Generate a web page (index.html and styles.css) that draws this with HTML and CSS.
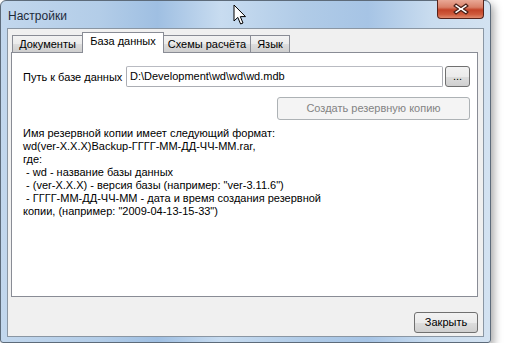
FILE: index.html
```html
<!DOCTYPE html>
<html>
<head>
    <title>Настройки</title>
    <link rel="stylesheet" href="styles.css">
</head>
<body>
    <div class="window">
        <div class="titlebar">
            <span class="title">Настройки</span>
            <div class="close-btn">
                <svg width="16" height="12" viewBox="0 0 16 12">
                    <path d="M3 1 L8 4.5 L13 1 L15 3 L10.5 6 L15 9 L13 11 L8 7.5 L3 11 L1 9 L5.5 6 L1 3 Z" fill="#fff" stroke="#4a2018" stroke-width="1.2" stroke-linejoin="round"/>
                </svg>
            </div>
        </div>

        <div class="client">
            <div class="tabs">
                <div class="tab tab-docs">Документы</div>
                <div class="tab tab-db active">База данных</div>
                <div class="tab tab-schemes">Схемы расчёта</div>
                <div class="tab tab-lang">Язык</div>
            </div>

            <div class="panel">
                <div class="path-row">
                    <span class="label">Путь к базе данных</span>
                    <div class="input">D:\Development\wd\wd\wd.mdb</div>
                    <div class="btn btn-browse">...</div>
                </div>

                <div class="backup-row">
                    <div class="btn btn-backup">Создать резервную копию</div>
                </div>

                <div class="info">
                    <div>Имя резервной копии имеет следующий формат:</div>
                    <div>wd(ver-X.X.X)Backup-ГГГГ-ММ-ДД-ЧЧ-ММ.rar,</div>
                    <div>где:</div>
                    <div>&nbsp;- wd - название базы данных</div>
                    <div>&nbsp;- (ver-X.X.X) - версия базы (например: "ver-3.11.6")</div>
                    <div>&nbsp;- ГГГГ-ММ-ДД-ЧЧ-ММ - дата и время создания резервной</div>
                    <div>копии, (например: "2009-04-13-15-33")</div>
                </div>
            </div>

            <div class="footer">
                <div class="btn btn-close">Закрыть</div>
            </div>
        </div>
    </div>

    <!-- mouse pointer over the title bar -->
    <svg class="cursor" width="14" height="22" viewBox="0 0 14 22">
        <path d="M1 1 L1 17 L4.8 13.4 L7.6 20 L10 19 L7.3 12.6 L12.5 12.6 Z" fill="#fff" stroke="#000" stroke-width="1" stroke-linejoin="round"/>
    </svg>
</body>
</html>
```

FILE: styles.css
```css
body {
    margin: 0;
    background-color: white;
    font-family: "Liberation Sans", Arial, sans-serif;
    font-size: 11px;
    color: black;
}

.window {
    width: 491px;
    height: 343px;
    box-sizing: border-box;
    display: flex;
    flex-direction: column;
    border: 1px solid #5d6b7a;
    border-radius: 6px 6px 3px 3px;
    background: linear-gradient(to right, #c2d7ed 0%, #b3cde8 20%, #9fbfe2 32%, #c8dcf0 45%, #b0cbe7 62%, #a6c4e5 75%, #c9dcef 88%, #d3e2f1 100%);
    box-shadow: 3px 4px 8px rgba(0, 0, 0, 0.35);
}

.titlebar {
    height: 27px;
    display: flex;
    align-items: flex-start;
}

.title {
    padding: 8px 0 0 7px;
    font-size: 12px;
    color: #1e2a3a;
}

.close-btn {
    margin-left: auto;
    margin-right: 6px;
    margin-top: -1px;
    width: 47px;
    height: 19px;
    box-sizing: border-box;
    border: 1px solid #56221a;
    border-top: none;
    border-radius: 0 0 4px 4px;
    background: linear-gradient(to bottom, #e9a896 0%, #d98068 40%, #c34328 55%, #cf5a3c 80%, #e08a6e 100%);
    display: flex;
    justify-content: center;
    align-items: center;
}

.client {
    flex: 1;
    margin: 0 6px 5px 6px;
    display: flex;
    flex-direction: column;
    border: 1px solid #8a96a3;
    background-color: #f0f0f0;
    padding: 3px 5px 0 3px;
}

.tabs {
    height: 20px;
    display: flex;
    align-items: flex-end;
    padding-left: 1px;
}

.tab {
    height: 17px;
    box-sizing: border-box;
    border: 1px solid #898c95;
    border-bottom: none;
    background: linear-gradient(to bottom, #f3f3f3 0%, #ebebeb 50%, #dddddd 51%, #cfcfcf 100%);
    text-align: center;
    line-height: 16px;
    margin-left: -1px;
}

.tab-docs {
    width: 71px;
    margin-left: 0;
}

.tab-db {
    width: 82px;
}

.tab-schemes {
    width: 88px;
}

.tab-lang {
    width: 40px;
}

.tab.active {
    height: 21px;
    margin-bottom: -1px;
    background: white;
    position: relative;
    line-height: 16px;
    z-index: 1;
}

.panel {
    height: 245px;
    box-sizing: border-box;
    border: 1px solid #898c95;
    background-color: white;
    padding: 13px 7px 0 11px;
}

.path-row {
    display: flex;
    align-items: center;
}

.label {
    width: 103px;
}

.input {
    width: 317px;
    height: 21px;
    box-sizing: border-box;
    border: 1px solid #abadb3;
    border-top-color: #b9bbc2;
    border-radius: 2px;
    padding-left: 3px;
    line-height: 19px;
}

.btn {
    box-sizing: border-box;
    border: 1px solid #707070;
    border-radius: 3px;
    background: linear-gradient(to bottom, #f2f2f2 0%, #ebebeb 50%, #dddddd 51%, #cfcfcf 100%);
    text-align: center;
}

.btn-browse {
    width: 25px;
    height: 21px;
    margin-left: 2px;
    line-height: 19px;
}

.backup-row {
    display: flex;
    justify-content: flex-end;
    margin-top: 10px;
}

.btn-backup {
    width: 193px;
    height: 23px;
    line-height: 21px;
    border-color: #adb2b5;
    background: #f4f4f4;
    color: #838383;
}

.info {
    margin-top: 7px;
    line-height: 13px;
    white-space: nowrap;
}

.footer {
    display: flex;
    justify-content: flex-end;
    padding-top: 15px;
}

.btn-close {
    width: 64px;
    height: 21px;
    line-height: 19px;
}

.cursor {
    position: absolute;
    left: 233px;
    top: 4px;
}
```
